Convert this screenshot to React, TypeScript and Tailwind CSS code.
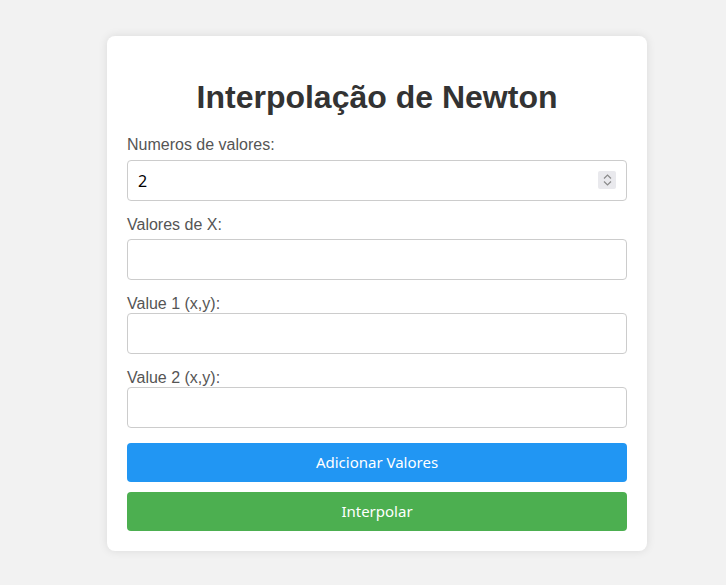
import { useState } from 'react';

export default function App() {
  const [count, setCount] = useState('2');

  return (
    <div className="min-h-[585px] bg-[#f2f2f2] pt-[36px] pb-[34px] font-['Liberation_Sans',Arial,sans-serif]">
      <div className="ml-[107px] w-[540px] rounded-lg bg-white px-5 pt-5 pb-5 shadow-[0_0_10px_rgba(0,0,0,0.1)]">
        <h1 className="mt-[23px] mb-5 text-center text-[32px] font-bold leading-[37px] text-[#333]">
          Interpolação de Newton
        </h1>

        {/* Quantidade */}
        <label className="mb-[6px] block text-base leading-[18px] text-[#555]">Numeros de valores:</label>
        <div className="relative mb-[15px]">
          <input
            type="text"
            inputMode="numeric"
            value={count}
            onChange={(e) => setCount(e.target.value)}
            className="block h-[41px] w-full rounded border border-[#ccc] px-2.5 font-['Noto_Sans',sans-serif] text-base text-black outline-none"
          />
          {/* spinner */}
          <div className="pointer-events-none absolute top-[11px] right-[11px] flex h-[18px] w-[18px] flex-col items-center justify-center gap-[2px] rounded-[2px] bg-[#e9e9ed]">
            <svg width="9" height="5" viewBox="0 0 9 5" fill="none" stroke="#8a8a8a" strokeWidth="1.2">
              <path d="M1 4.5 L4.5 1 L8 4.5" />
            </svg>
            <svg width="9" height="5" viewBox="0 0 9 5" fill="none" stroke="#8a8a8a" strokeWidth="1.2">
              <path d="M1 0.5 L4.5 4 L8 0.5" />
            </svg>
          </div>
        </div>

        <label className="mb-[5px] block text-base leading-[18px] text-[#555]">Valores de X:</label>
        <input
          type="text"
          className="mb-[15px] block h-[41px] w-full rounded border border-[#ccc] px-2.5 text-base outline-none"
        />

        {/* Pares */}
        <label className="block text-base leading-[18px] text-[#555]">Value 1 (x,y):</label>
        <input
          type="text"
          className="mb-[15px] block h-[41px] w-full rounded border border-[#ccc] px-2.5 text-base outline-none"
        />
        <label className="block text-base leading-[18px] text-[#555]">Value 2 (x,y):</label>
        <input
          type="text"
          className="mb-[15px] block h-[41px] w-full rounded border border-[#ccc] px-2.5 text-base outline-none"
        />

        <button className="mb-[10px] block h-[39px] w-full rounded bg-[#2196F3] font-['Noto_Sans',sans-serif] text-[15px] text-white">
          Adicionar Valores
        </button>
        <button className="block h-[39px] w-full rounded bg-[#4CAF50] font-['Noto_Sans',sans-serif] text-[15px] text-white">
          Interpolar
        </button>
      </div>
    </div>
  );
}
